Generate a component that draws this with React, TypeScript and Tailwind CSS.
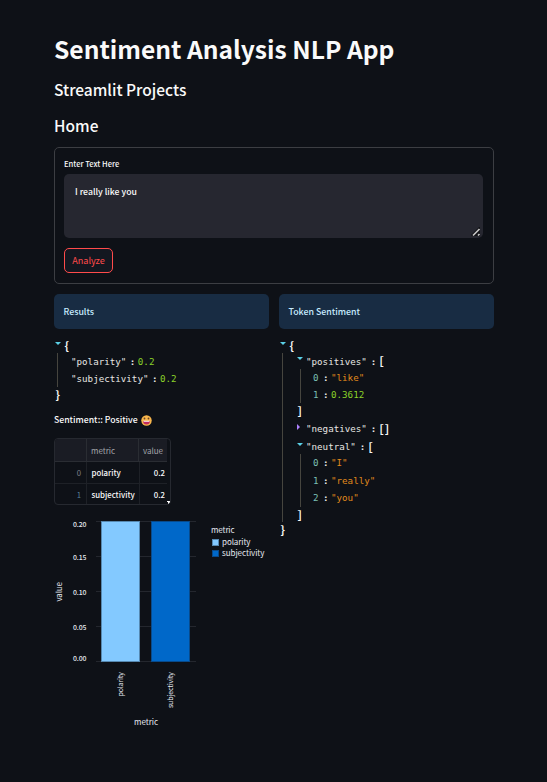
import type { ReactNode } from "react";

const SANS = "font-['Noto_Sans_CJK_SC','Noto_Sans',sans-serif]";
const MONO = "font-['DejaVu_Sans_Mono',monospace]";

function Down() {
  return (
    <svg className="mb-[5px] h-[3px] w-[6px] shrink-0" viewBox="0 0 6 3">
      <path d="M0 0H6L3 3Z" fill="#5ad0e6" />
    </svg>
  );
}

function Right() {
  return (
    <svg className="mb-[4px] h-[6px] w-[3px] shrink-0" viewBox="0 0 3 6">
      <path d="M0 0L3 3L0 6Z" fill="#ae81ff" />
    </svg>
  );
}

function Brace({ children }: { children: ReactNode }) {
  return (
    <span className="font-['Noto_Sans_Mono_CJK_SC','DejaVu_Sans_Mono',monospace] text-[11px] font-bold text-[#f9f8f5]">
      {children}
    </span>
  );
}

function Key({ name }: { name: string }) {
  return <span className="whitespace-pre text-[#e8e7e3]">{`"${name}"`}</span>;
}

function Colon() {
  return <span className="w-[6px] font-bold text-[#e9e8e5]">:</span>;
}

function Item({ index, value, height, color }: { index: number; value: string; height: string; color: string }) {
  return (
    <div className={`flex items-center ${height}`}>
      <span className="w-[10px] text-[#7cc0b5]">{index}</span>
      <Colon />
      <span className={`ml-[2px] ${color}`}>{value}</span>
    </div>
  );
}

function Info({ children }: { children: ReactNode }) {
  return (
    <div className="flex h-[35px] items-center rounded-[5px] bg-[#182c43] pl-[9.5px] text-[8.8px] font-medium text-[#c7ebff]">
      {children}
    </div>
  );
}

function Chart() {
  const ticks = [
    { y: 6.5, ty: 12, label: "0.20" },
    { y: 41.5, ty: 44.5, label: "0.15" },
    { y: 76.5, ty: 79.5, label: "0.10" },
    { y: 111.5, ty: 114.5, label: "0.05" },
    { y: 146.5, ty: 146, label: "0.00" },
  ];
  return (
    <svg className="mt-[10px] h-[220px] w-[215px]" viewBox="0 0 215 220" fill="#e6eaf1">
      {ticks.map((t) => (
        <g key={t.label}>
          <path d={`M42 ${t.y}H142`} stroke="#24272e" />
          <text x="32.5" y={t.ty} textAnchor="end" fontSize="6.9" fontWeight="500" textLength="13.5">
            {t.label}
          </text>
        </g>
      ))}
      <rect x="47.5" y="6.5" width="38" height="140" fill="#83c9ff" stroke="#5688b0" />
      <rect x="97.5" y="6.5" width="38" height="140" fill="#0068c9" stroke="#084a8b" />
      <text transform="translate(8 86.5) rotate(-90)" fontSize="8" textLength="19.5">value</text>
      <text transform="translate(69 181.5) rotate(-90)" fontSize="7" textLength="24.5">polarity</text>
      <text transform="translate(118.5 193) rotate(-90)" fontSize="7" textLength="36">subjectivity</text>
      <text x="80" y="209.5" fontSize="8" textLength="24">metric</text>
      <text x="157" y="17.5" fontSize="8" textLength="23.5">metric</text>
      <rect x="158.5" y="24.5" width="6" height="6" fill="#83c9ff" stroke="#5688b0" />
      <rect x="158.5" y="35.5" width="6" height="6" fill="#0068c9" stroke="#084a8b" />
      <text x="168" y="29.5" fontSize="8" textLength="28.5">polarity</text>
      <text x="168" y="40.5" fontSize="8" textLength="42.5">subjectivity</text>
    </svg>
  );
}

export default function App() {
  return (
    <main className={`h-[782px] w-[547px] overflow-hidden bg-[#0e1117] pl-[54px] pt-[28px] text-[#fafafa] ${SANS}`}>
      <div className="w-[440px]">
        <h1 className="h-[40px] whitespace-nowrap text-[24.6px] font-bold leading-[40px]">Sentiment Analysis NLP App</h1>
        <h3 className="mt-[9px] h-[24px] text-[15.5px] font-medium leading-[24px]">Streamlit Projects</h3>
        <h3 className="mt-[12px] h-[24px] text-[15.5px] font-medium leading-[24px]">Home</h3>

        <form className="mt-[10px] h-[137px] rounded-[5px] border border-[#3c3e43] px-[9px] pt-[10px]">
          <div className="h-[12px] text-[7.6px] font-medium leading-[12px]">Enter Text Here</div>
          <div className="mt-[4px] flex h-[64px] w-[419px] items-end justify-between rounded-[5px] bg-[#262730] pl-[11px]">
            <span className="self-start pt-[11px] text-[8.7px] font-medium leading-[13px]">I really like you</span>
            <svg className="mb-[1px] mr-[2px] h-[10px] w-[10px]" viewBox="0 0 10 10">
              <path d="M0 8L8 0H9V9H1Z" fill="#111216" />
              <path d="M2 8.5L8.5 2M7 8.5L8.5 7" stroke="#c5c5c5" strokeWidth="1.7" />
            </svg>
          </div>
          <button type="button" className="mt-[10px] flex h-[25px] w-[49px] items-center justify-center rounded-[5px] border border-[#ff4b4b] bg-[#131720] text-[9.1px] text-[#ff4b4b]">
            Analyze
          </button>
        </form>

        <div className="mt-[10px] grid grid-cols-2 gap-[10px]">
          <section>
            <Info>Results</Info>
            <div className={`mt-[8px] text-[9.2px] leading-[17px] ${MONO}`}>
              <div className="flex h-[16px] items-center gap-[3px] pl-[1px] pt-px">
                <Down />
                <Brace>{"{"}</Brace>
              </div>
              <div className="ml-[3px] h-[34px] border-l border-[#46453f] pl-[13px]">
                <div className="flex h-[17px] items-center">
                  <Key name="polarity" />
                  <span className="w-[3.5px]" />
                  <Colon />
                  <span className="ml-[2px] text-[#8ad329]">0.2</span>
                </div>
                <div className="flex h-[17px] items-center">
                  <Key name="subjectivity" />
                  <span className="w-[3.5px]" />
                  <Colon />
                  <span className="ml-[2px] text-[#8ad329]">0.2</span>
                </div>
              </div>
              <div className="flex h-[15px] items-center pl-px">
                <Brace>{"}"}</Brace>
              </div>
            </div>

            <div className="mt-[11px] flex h-[14px] items-center text-[8.7px] font-medium leading-[14px]">
              Sentiment:: Positive
              <svg className="ml-[3px] h-[11px] w-[11px]" viewBox="0 0 22 22">
                <circle cx="11" cy="11" r="10.5" fill="#f8b64c" />
                <path d="M4 12H18Q17.5 19 11 19T4 12Z" fill="#c22a5e" />
                <path d="M4.5 11.5H17.5L16.5 13.5H5.5Z" fill="#fff" />
                <circle cx="7" cy="7" r="1.8" fill="#6b4528" />
                <circle cx="15" cy="7" r="1.8" fill="#6b4528" />
              </svg>
            </div>

            <div className="mt-[11px] flex h-[67px] w-[117px] items-start overflow-hidden rounded-[4px] border border-[#262930] text-[8px]">
              <div className="w-[112px]">
                <div className="grid h-[23px] grid-cols-[32px_52px_28px] items-stretch border-b border-[#2a2d33] bg-[#1a1c24] leading-[23px] text-[#a3a5aa]">
                  <span className="border-r border-[#2a2d33]" />
                  <span className="border-r border-[#2a2d33] pl-[4px]">metric</span>
                  <span className="pl-[4px]">value</span>
                </div>
                <div className="grid h-[22px] grid-cols-[32px_53px_27px] border-b border-[#1e2127] text-[7.8px] font-medium leading-[21px]">
                  <span className="border-r border-[#1e2127] pr-[5px] text-right font-normal text-[#7d7f85]">0</span>
                  <span className="border-r border-[#1e2127] pl-[4.5px]">polarity</span>
                  <span className="pr-[2px] text-right">0.2</span>
                </div>
                <div className="grid h-[18px] grid-cols-[32px_53px_27px] text-[7.8px] font-medium leading-[21px]">
                  <span className="border-r border-[#1e2127] pr-[5px] text-right font-normal text-[#568099]">1</span>
                  <span className="border-r border-[#1e2127] pl-[4.5px]">subjectivity</span>
                  <span className="pr-[2px] text-right">0.2</span>
                </div>
              </div>
              <svg className="h-[3px] w-[3px] shrink-0 self-end" viewBox="0 0 3 3">
                <path d="M0 0H3V2H2V3H1V1H0Z" fill="#fff" />
              </svg>
            </div>
            <Chart />
          </section>

          <section>
            <Info>Token Sentiment</Info>
            <div className={`mt-[8px] text-[9.2px] leading-[17px] ${MONO}`}>
              <div className="flex h-[16px] items-center gap-[3px] pl-[1px] pt-px">
                <Down />
                <Brace>{"{"}</Brace>
              </div>
              <div className="ml-[3px] border-l border-[#46453f] pl-[14px]">
                <div className="flex h-[16px] items-center">
                  <Down />
                  <span className="w-[3px]" />
                  <Key name="positives" />
                  <span className="w-[4px]" />
                  <Colon />
                  <span className="ml-[2px]"><Brace>[</Brace></span>
                </div>
                <div className="ml-[3px] h-[34px] border-l border-[#46453f] pl-[12px]">
                  <Item index={0} value={'"like"'} height="h-[17px]" color="text-[#e08a1c]" />
                  <Item index={1} value="0.3612" height="h-[16px]" color="text-[#8ad329]" />
                </div>
                <div className="flex h-[15px] items-center"><Brace>]</Brace></div>
                <div className="flex h-[19px] items-center pt-[2px]">
                  <Right />
                  <span className="w-[6px]" />
                  <Key name="negatives" />
                  <span className="w-[4px]" />
                  <Colon />
                  <span className="ml-[2px]"><Brace>[]</Brace></span>
                </div>
                <div className="flex h-[17px] items-center pt-[2px]">
                  <Down />
                  <span className="w-[3px]" />
                  <Key name="neutral" />
                  <span className="w-[4px]" />
                  <Colon />
                  <span className="ml-[2px]"><Brace>[</Brace></span>
                </div>
                <div className="ml-[3px] h-[53px] border-l border-[#46453f] pl-[12px]">
                  <Item index={0} value={'"I"'} height="h-[17px]" color="text-[#e08a1c]" />
                  <Item index={1} value={'"really"'} height="h-[18px]" color="text-[#e08a1c]" />
                  <Item index={2} value={'"you"'} height="h-[17px]" color="text-[#e08a1c]" />
                </div>
                <div className="flex h-[15px] items-center"><Brace>]</Brace></div>
              </div>
              <div className="flex h-[15px] items-center pl-px">
                <Brace>{"}"}</Brace>
              </div>
            </div>
          </section>
        </div>
      </div>
    </main>
  );
}
